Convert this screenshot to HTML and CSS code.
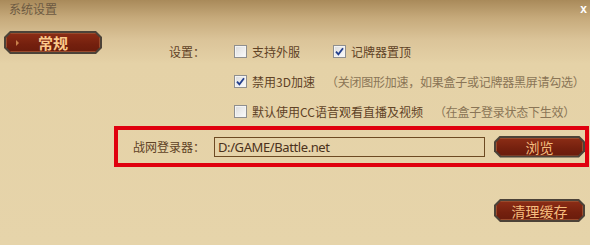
FILE: index.html
```html
<!DOCTYPE html>
<html lang="zh-CN">
  <head>
    <meta charset="UTF-8" />
    <title>系统设置</title>
    <link rel="stylesheet" href="styles.css">
  </head>
  <body>
    <div class="window">
      <div class="titlebar">
        <span class="title">系统设置</span>
        <span class="close">x</span>
      </div>

      <div class="main">
        <div class="sidebar">
          <div class="tab">
            <div class="tab-inner"><span class="arrow"></span>常规</div>
          </div>
        </div>

        <div class="content">
          <div class="row">
            <span class="label">设置：</span>
            <label class="opt"><span class="box"></span>支持外服</label>
            <label class="opt">
              <span class="box">
                <svg viewBox="0 0 9 9" width="9" height="9"><path d="M1 4.6 L3.4 7.4 L8 1.2" fill="none" stroke="#233f8c" stroke-width="1.8"/></svg>
              </span>记牌器置顶
            </label>
          </div>
          <div class="row">
            <span class="label"></span>
            <label class="opt">
              <span class="box">
                <svg viewBox="0 0 9 9" width="9" height="9"><path d="M1 4.6 L3.4 7.4 L8 1.2" fill="none" stroke="#233f8c" stroke-width="1.8"/></svg>
              </span>禁用3D加速
            </label>
            <span class="hint">（关闭图形加速，如果盒子或记牌器黑屏请勾选）</span>
          </div>
          <div class="row">
            <span class="label"></span>
            <label class="opt"><span class="box"></span>默认使用CC语音观看直播及视频</label>
            <span class="hint">（在盒子登录状态下生效）</span>
          </div>

          <div class="launcher">
            <span class="label">战网登录器：</span>
            <div class="path-input">D:/GAME/Battle.net</div>
            <div class="btn"><div class="btn-inner">浏览</div></div>
          </div>

          <div class="actions">
            <div class="btn"><div class="btn-inner">清理缓存</div></div>
          </div>
        </div>
      </div>
    </div>
  </body>
</html>
```

FILE: styles.css
```css
  body {
    margin: 0;
    width: 590px;
    height: 245px;
    overflow: hidden;
    font-family: "Noto Sans CJK SC", "Noto Sans", sans-serif;
    font-size: 12px;
    color: #5f4226;
    background: linear-gradient(to bottom, #a98a5a 0, #c6aa7b 18px, #dbc499 40px, #e5d2a7 64px, #e6d4aa 100%);
  }

  .titlebar {
    display: flex;
    justify-content: space-between;
    align-items: center;
    height: 24px;
    padding: 0 3px 7px 9px;
    box-sizing: border-box;
  }

  .title {
    color: #6d5a42;
    font-size: 12px;
  }

  .close {
    color: #fff;
    font-family: "Liberation Sans", sans-serif;
    font-weight: bold;
    font-size: 12px;
  }

  .main {
    display: flex;
  }

  .sidebar {
    width: 114px;
    flex: none;
  }

  /* octagon buttons */
  .tab,
  .btn {
    padding: 2px;
    background: #4c4238;
    clip-path: polygon(6px 0, calc(100% - 6px) 0, 100% 6px, 100% calc(100% - 6px), calc(100% - 6px) 100%, 6px 100%, 0 calc(100% - 6px), 0 6px);
    box-sizing: border-box;
  }

  .tab-inner,
  .btn-inner {
    position: relative;
    display: flex;
    justify-content: center;
    align-items: center;
    height: 100%;
    background: linear-gradient(to bottom, #8c2d16, #74200e 60%, #6a1c0c);
    clip-path: polygon(5px 0, calc(100% - 5px) 0, 100% 5px, 100% calc(100% - 5px), calc(100% - 5px) 100%, 5px 100%, 0 calc(100% - 5px), 0 5px);
    box-shadow: inset 0 0 0 1px #9a4a2c;
    color: #f6bd7e;
  }

  .tab {
    width: 98px;
    height: 23px;
    margin: 7px 0 0 4px;
  }

  .tab-inner {
    font-size: 15px;
    font-weight: bold;
    color: #fbc88a;
  }

  .arrow {
    position: absolute;
    left: 10px;
    top: 7px;
    border-left: 3px solid #c9824c;
    border-top: 3px solid transparent;
    border-bottom: 3px solid transparent;
  }

  .content {
    flex: 1;
    padding-top: 12px;
  }

  .row {
    display: flex;
    align-items: center;
    height: 30px;
  }

  .label {
    width: 91px;
    flex: none;
    text-align: right;
  }

  .opt {
    display: flex;
    align-items: center;
    margin-left: 29px;
  }

  .opt + .opt {
    margin-left: 33px;
  }

  .box {
    display: flex;
    justify-content: center;
    align-items: center;
    width: 13px;
    height: 13px;
    margin-right: 5px;
    border: 1px solid #8f8f8f;
    box-sizing: border-box;
    background: linear-gradient(135deg, #dcdcdc, #fbfbfb);
    box-shadow: inset 0 0 0 1px #f4f4f4;
  }

  .hint {
    margin-left: 11px;
    letter-spacing: -0.25px;
    color: #8a7556;
  }

  .launcher {
    display: flex;
    align-items: center;
    width: 475px;
    height: 41px;
    border: 4px solid #e0000e;
    box-sizing: border-box;
  }

  .launcher .label {
    width: 87px;
  }

  .path-input {
    width: 271px;
    height: 20px;
    margin-left: 9px;
    padding-left: 3px;
    border: 1px solid #6d4a22;
    box-sizing: border-box;
    font-family: "Noto Sans", sans-serif;
    font-size: 13px;
    letter-spacing: -0.4px;
    line-height: 18px;
    color: #4b311b;
  }

  .btn {
    width: 91px;
    height: 22px;
    margin-left: 9px;
  }

  .btn-inner {
    font-size: 14px;
  }

  .actions {
    display: flex;
    justify-content: flex-end;
    padding-right: 5px;
    margin-top: 32px;
  }

  .actions .btn {
    height: 23px;
  }
```
